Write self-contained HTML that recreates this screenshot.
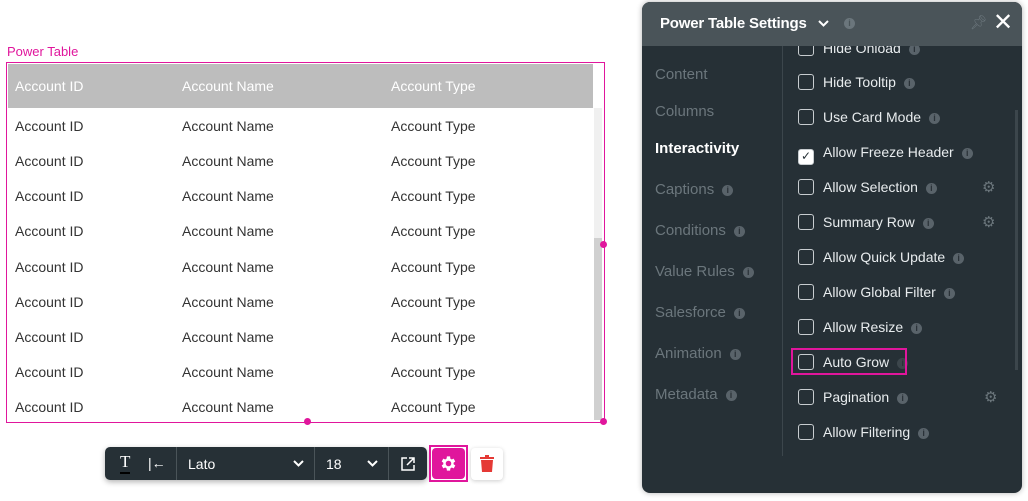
<!DOCTYPE html>
<html><head><style>
*{margin:0;padding:0;box-sizing:border-box}
body{width:1028px;height:501px;background:#fff;position:relative;overflow:hidden;font-family:"Liberation Sans",sans-serif}
.a{position:absolute}
.t{font-size:14px;color:#333;white-space:nowrap}
.h{font-size:14px;color:#fff;white-space:nowrap}
.nav{position:absolute;left:655px;font-size:15px;color:#6b767c;white-space:nowrap}
.i{display:inline-block;width:11px;height:11px;border-radius:50%;background:#59636a;color:#2a3238;font-size:9px;text-align:center;line-height:11px;font-weight:bold;vertical-align:1px;margin-left:8px}
.row{position:absolute;left:798px;height:18px;font-size:14px;color:#e8ecee;white-space:nowrap;line-height:16px}
.cb{display:inline-block;width:16px;height:16px;border:1.5px solid #c8cdd0;border-radius:3px;vertical-align:-3px;margin-right:9px}
.g{position:absolute;left:982px;color:#6b767c;font-size:15px}
</style></head><body>
<div class="a" style="left:7px;top:44px;font-size:13px;color:#e0169c">Power Table</div>
<div class="a" style="left:6px;top:62px;width:599px;height:361px;border:1.5px solid #e0169c"></div>
<div class="a" style="left:8px;top:64px;width:585px;height:44px;background:#bdbdbd"></div>
<div class="a" style="left:594px;top:108px;width:8px;height:130px;background:#f0f0f0"></div>
<div class="a" style="left:594px;top:238px;width:8px;height:182px;background:#d0d0d0"></div>
<div class="a h" style="left:15px;top:78px">Account ID</div>
<div class="a h" style="left:182px;top:78px">Account Name</div>
<div class="a h" style="left:391px;top:78px">Account Type</div>
<div id="rows"></div>
<div class="a" style="left:600px;top:241px;width:7px;height:7px;border-radius:50%;background:#e0169c"></div>
<div class="a" style="left:600px;top:418px;width:7px;height:7px;border-radius:50%;background:#e0169c"></div>
<div class="a" style="left:304px;top:418px;width:7px;height:7px;border-radius:50%;background:#e0169c"></div>

<div class="a" style="left:105px;top:447px;width:322px;height:33px;background:#263036;border-radius:5px;box-shadow:0 2px 6px rgba(0,0,0,.3)"></div>
<div class="a" style="left:120px;top:452px;color:#fff;font-size:17px;font-family:'Liberation Serif',serif;border-bottom:2px solid #000;line-height:20px">T</div>
<div class="a" style="left:148px;top:455px;color:#fff;font-size:14px">|←</div>
<div class="a" style="left:176px;top:447px;width:1px;height:33px;background:#4a5459"></div>
<div class="a" style="left:188px;top:456px;color:#fff;font-size:14px">Lato</div>
<svg class="a" style="left:293px;top:460px" width="11" height="8" viewBox="0 0 11 8"><path d="M1 1l4.5 4.5L10 1" stroke="#fff" stroke-width="2" fill="none"/></svg>
<div class="a" style="left:314px;top:447px;width:1px;height:33px;background:#4a5459"></div>
<div class="a" style="left:326px;top:456px;color:#fff;font-size:14px">18</div>
<svg class="a" style="left:367px;top:460px" width="11" height="8" viewBox="0 0 11 8"><path d="M1 1l4.5 4.5L10 1" stroke="#fff" stroke-width="2" fill="none"/></svg>
<div class="a" style="left:388px;top:447px;width:1px;height:33px;background:#4a5459"></div>
<svg class="a" style="left:401px;top:457px" width="14" height="14" viewBox="0 0 14 14" fill="none" stroke="#fff" stroke-width="1.5"><path d="M6 1H1v12h12V8M8 1h5v5M13 1L6 8"/></svg>
<div class="a" style="left:429px;top:445px;width:39px;height:37px;border:2px solid #e0169c"></div>
<div class="a" style="left:432px;top:448px;width:33px;height:31px;background:#e0169c;border-radius:4px"></div>
<svg class="a" style="left:439px;top:454px" width="19" height="19" viewBox="0 0 24 24"><path fill="#fff" d="M19.4 13a7.5 7.5 0 000-2l2.1-1.6-2-3.5-2.5 1a7.6 7.6 0 00-1.7-1L15 3h-4l-.4 2.9a7.6 7.6 0 00-1.7 1l-2.5-1-2 3.5L6.5 11a7.5 7.5 0 000 2l-2.1 1.6 2 3.5 2.5-1a7.6 7.6 0 001.7 1L11 21h4l.4-2.9a7.6 7.6 0 001.7-1l2.5 1 2-3.5zM13 15.5a3.5 3.5 0 110-7 3.5 3.5 0 010 7z" transform="translate(-1 0)"/></svg>
<div class="a" style="left:471px;top:448px;width:32px;height:32px;background:#fff;border-radius:4px;box-shadow:0 1px 4px rgba(0,0,0,.2)"></div>
<svg class="a" style="left:480px;top:455px" width="14" height="17" viewBox="0 0 14 17"><path fill="#e53935" d="M0 2h14v2H0zM5 0h4v2H5zM1 5h12l-1 12H2z"/></svg>

<div class="a" style="left:642px;top:2px;width:380px;height:491px;background:#263036;border-radius:8px;box-shadow:0 0 6px rgba(0,0,0,.3);overflow:hidden">
<div style="height:44px;background:#4a5459"></div>
</div>
<div class="a" style="left:660px;top:15px;color:#fff;font-size:15px;font-weight:bold;letter-spacing:-0.2px">Power Table Settings</div>
<svg class="a" style="left:818px;top:20px" width="11" height="8" viewBox="0 0 11 8"><path d="M1 1l4.5 4.5L10 1" stroke="#fff" stroke-width="2" fill="none"/></svg>
<span class="a i" style="left:844px;top:18px;background:#6b767c;color:#4a5459;margin:0">i</span>
<div class="a" style="left:970px;top:14px;color:#6b767c;font-size:14px">📌︎</div>
<div class="a" style="left:993px;top:8px;color:#fff;font-size:24px">✕</div>
<div class="a" style="left:782px;top:46px;width:1px;height:410px;background:#3c464c"></div>
<div class="a" style="left:1015px;top:110px;width:3px;height:260px;background:#3c464c"></div>
<div class="nav" style="top:66px">Content</div>
<div class="nav" style="top:103px">Columns</div>
<div class="nav" style="top:140px;color:#fff;font-weight:bold">Interactivity</div>
<div class="nav" style="top:181px">Captions<span class="i">i</span></div>
<div class="nav" style="top:222px">Conditions<span class="i">i</span></div>
<div class="nav" style="top:263px">Value Rules<span class="i">i</span></div>
<div class="nav" style="top:304px">Salesforce<span class="i">i</span></div>
<div class="nav" style="top:345px">Animation<span class="i">i</span></div>
<div class="nav" style="top:386px">Metadata<span class="i">i</span></div>
<div class="a" style="left:783px;top:46px;width:232px;height:410px;overflow:hidden">
<div class="row" style="left:15px;top:-6px"><span class="cb"></span>Hide Onload<span class="i">i</span></div>
</div>
<div class="row" style="top:74px"><span class="cb"></span>Hide Tooltip<span class="i">i</span></div>
<div class="row" style="top:109px"><span class="cb"></span>Use Card Mode<span class="i">i</span></div>
<div class="row" style="top:144px"><span class="cb" style="background:#fff;color:#263036;font-size:12px;text-align:center;line-height:13px">✓</span>Allow Freeze Header<span class="i">i</span></div>
<div class="row" style="top:179px"><span class="cb"></span>Allow Selection<span class="i">i</span></div>
<div class="row" style="top:214px"><span class="cb"></span>Summary Row<span class="i">i</span></div>
<div class="row" style="top:249px"><span class="cb"></span>Allow Quick Update<span class="i">i</span></div>
<div class="row" style="top:284px"><span class="cb"></span>Allow Global Filter<span class="i">i</span></div>
<div class="row" style="top:319px"><span class="cb"></span>Allow Resize<span class="i">i</span></div>
<div class="row" style="top:354px"><span class="cb"></span>Auto Grow<span class="i" style="background:#3c464c">i</span></div>
<div class="a" style="left:791px;top:348px;width:116px;height:27px;border:2px solid #e0169c"></div>
<div class="row" style="top:389px"><span class="cb"></span>Pagination<span class="i">i</span></div>
<div class="row" style="top:424px"><span class="cb"></span>Allow Filtering<span class="i">i</span></div>
<div class="g" style="top:178px">⚙</div>
<div class="g" style="top:213px">⚙</div>
<div class="g" style="top:388px;left:984px">⚙</div>
<script>
var h='',y=[118,153,188,223,259,294,329,364,399];
y.forEach(function(t){h+='<div class="a t" style="left:15px;top:'+t+'px">Account ID</div><div class="a t" style="left:182px;top:'+t+'px">Account Name</div><div class="a t" style="left:391px;top:'+t+'px">Account Type</div>';});
document.getElementById('rows').innerHTML=h;
</script>
</body></html>
